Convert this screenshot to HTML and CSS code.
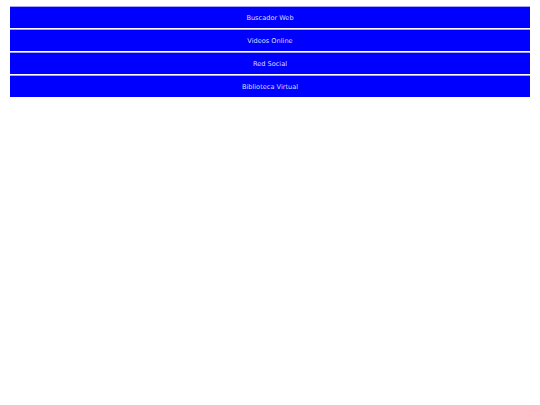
FILE: index.html
```html
<!DOCTYPE html>
<html lang="es">
<head>
<meta charset="utf-8">
<title>Menú</title>
<link rel="stylesheet" href="styles.css">
</head>
<body>
<ul class="menu">
  <li class="menu-item"><a href="#">Buscador Web</a></li>
  <li class="menu-item"><a href="#">Videos Online</a></li>
  <li class="menu-item"><a href="#">Red Social</a></li>
  <li class="menu-item"><a href="#">Biblioteca Virtual</a></li>
</ul>
</body>
</html>
```
FILE: styles.css
```css
html, body {
  margin: 0;
  padding: 0;
  background: #ffffff;
}
body {
  padding: 6px 10px;
  font-family: "DejaVu Sans", Verdana, sans-serif;
}
.menu {
  list-style: none;
  margin: 0;
  padding: 0;
  display: flex;
  flex-direction: column;
  gap: 1px;
}
.menu-item {
  border-top: 1px solid #a6a6f6;
  background: #0000ff;
}
.menu-item a {
  display: block;
  height: 20px;
  padding-top: 1px;
  line-height: 21px;
  text-align: center;
  font-size: 6.6px;
  color: #dcdcff;
  text-decoration: none;
}
```
